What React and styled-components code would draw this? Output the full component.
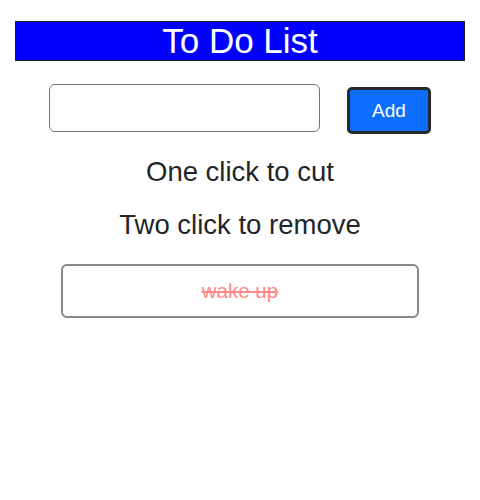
import React from "react";
import styled, { createGlobalStyle } from "styled-components";

const Global = createGlobalStyle`
  html, body { margin: 0; padding: 0; background: #fff; }
  body { font-family: "Liberation Sans", Arial, sans-serif; color: #212529; }
`;

const Page = styled.div`
  display: flex;
  flex-direction: column;
  align-items: center;
  padding: 21px 15px 0;
`;

const Header = styled.h1`
  box-sizing: border-box;
  width: 100%;
  margin: 0;
  height: 40px;
  line-height: 38px;
  background: #0000ff;
  border: 1px solid #222;
  color: #fff;
  font-size: 35px;
  font-weight: 400;
  text-align: center;
`;

const InputRow = styled.div`
  display: flex;
  align-items: flex-start;
  gap: 27px;
  margin-top: 23px;
`;

const TextInput = styled.input`
  box-sizing: border-box;
  width: 271px;
  height: 48px;
  border: 1px solid #767676;
  border-radius: 6px;
  padding: 0 10px;
  font-size: 18px;
  font-family: inherit;
  outline: none;
`;

const AddButton = styled.button`
  box-sizing: border-box;
  width: 84px;
  height: 47px;
  margin-top: 3px;
  background: #0d6efd;
  color: #fff;
  border: 3px solid #25282c;
  border-radius: 5px;
  font-family: inherit;
  font-size: 19px;
  cursor: pointer;
`;

const Instruction = styled.p`
  margin: ${(p) => p.$top}px 0 0;
  font-size: 27.5px;
  line-height: 32px;
  color: #212529;
  text-align: center;
`;

const TodoItem = styled.div`
  box-sizing: border-box;
  width: 358px;
  height: 54px;
  margin-top: 23px;
  border: 2px solid #888;
  border-radius: 6px;
  display: flex;
  align-items: center;
  justify-content: center;
  font-size: 20.5px;
  color: ${(p) => (p.$done ? "#ff8a8a" : "#212529")};
  text-decoration: ${(p) => (p.$done ? "line-through" : "none")};
  cursor: pointer;
`;

export default function App() {
  const todos = [{ text: "wake up", done: true }];
  return (
    <>
      <Global />
      <Page>
        <Header>To Do List</Header>
        <InputRow>
          <TextInput type="text" />
          <AddButton>Add</AddButton>
        </InputRow>
        <Instruction $top={22}>One click to cut</Instruction>
        <Instruction $top={21}>Two click to remove</Instruction>
        {todos.map((t) => (
          <TodoItem key={t.text} $done={t.done}>
            {t.text}
          </TodoItem>
        ))}
      </Page>
    </>
  );
}
